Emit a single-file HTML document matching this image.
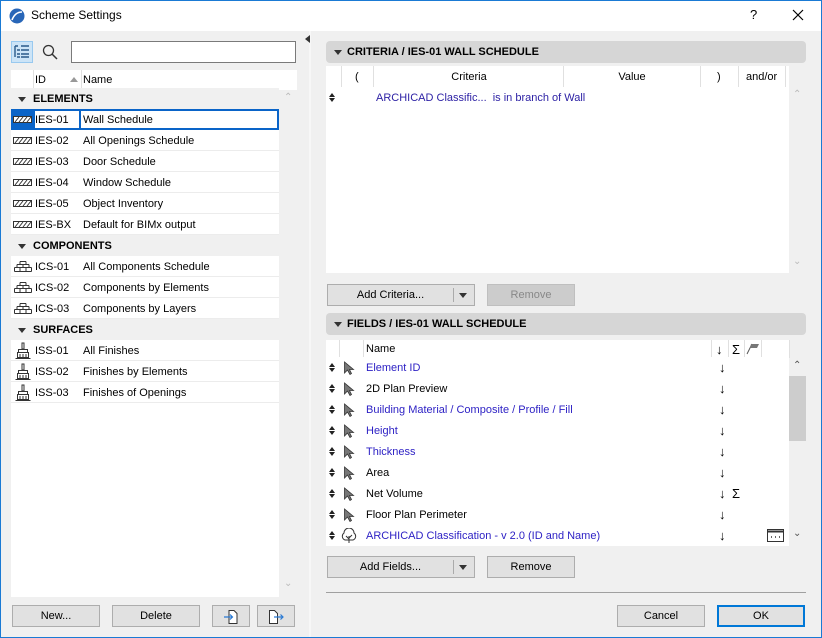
<!DOCTYPE html>
<html><head><meta charset="utf-8"><style>
*{box-sizing:border-box;margin:0;padding:0}
body{width:822px;height:638px;overflow:hidden;font-family:"Liberation Sans",sans-serif;font-size:11px;color:#000;background:#f0f0f0;position:relative}
.a{position:absolute}
.win{left:0;top:0;width:822px;height:638px;border:1px solid #1a7ad4}
.title{left:1px;top:1px;width:820px;height:30px;background:#fff}
.btn{position:absolute;background:#e1e1e1;border:1px solid #adadad;text-align:center;line-height:21px;font-size:11px}
.row{position:absolute;left:11px;width:268px;height:21px;background:#fff;border-bottom:1px solid #ececec;line-height:22px}
.grp{position:absolute;left:11px;width:268px;height:21px;background:#f0f0f0;line-height:22px;font-weight:bold;font-size:11px}
.grp:before{content:"";position:absolute;left:7px;top:9px;border-left:4px solid transparent;border-right:4px solid transparent;border-top:5px solid #333}
.grp span{position:absolute;left:22px}
.id{position:absolute;left:24px}
.nm{position:absolute;left:72px}
.hdr{position:absolute;background:#d6d6d6;border-radius:4px;height:22px;line-height:23px;font-weight:bold;font-size:11px}
.hdr:before{content:"";position:absolute;left:8px;top:9px;border-left:4px solid transparent;border-right:4px solid transparent;border-top:5px solid #333}
.hdr span{position:absolute;left:21px}
.fr{position:absolute;left:326px;width:463px;height:21px;line-height:22px;background:#fff}
.fr .n{position:absolute;left:40px}
.blue{color:#2b1fc4}
.ud{position:absolute;left:3px;top:6px;width:7px;height:10px}
.ud:before{content:"";position:absolute;left:0;top:0;border-left:3px solid transparent;border-right:3px solid transparent;border-bottom:4px solid #222}
.ud:after{content:"";position:absolute;left:0;top:5px;border-left:3px solid transparent;border-right:3px solid transparent;border-top:4px solid #222}
.arr{position:absolute;left:393px;font-size:13px}
.cur{position:absolute;left:17px;top:4px}
</style></head><body>
<div class="a win"></div>
<div class="a title"></div>
<svg class="a" style="left:9px;top:8px" width="16" height="16" viewBox="0 0 16 16"><circle cx="8" cy="8" r="7.5" fill="#2866b8"/><path d="M3 12 Q6 4 13 4" stroke="#fff" stroke-width="1.6" fill="none"/></svg>
<div class="a" style="left:31px;top:8px;font-size:12px">Scheme Settings</div>
<div class="a" style="left:750px;top:7px;font-size:13px">?</div>
<svg class="a" style="left:792px;top:9px" width="12" height="12"><path d="M1 1L11 11M11 1L1 11" stroke="#000" stroke-width="1.2"/></svg>

<div class="a" style="left:11px;top:41px;width:22px;height:22px;background:#cce4f7;border:1px solid #99c9ef"></div>
<svg class="a" style="left:14px;top:45px" width="16" height="14"><path d="M1 1h3M1 1v11M3 5h3M3 9h3M3 12h3M7 1h8M7 5h8M7 9h8M7 12h8" stroke="#2a5a8a" stroke-width="1.4" fill="none"/></svg>
<svg class="a" style="left:42px;top:44px" width="16" height="16"><circle cx="6.5" cy="6.5" r="5" stroke="#333" stroke-width="1.3" fill="none"/><path d="M10 10l5 5" stroke="#333" stroke-width="1.5"/></svg>
<div class="a" style="left:71px;top:41px;width:225px;height:22px;background:#fff;border:1px solid #7a7a7a"></div>

<div class="a" style="left:11px;top:70px;width:286px;height:527px;background:#fff"></div>
<div class="a" style="left:279px;top:90px;width:18px;height:507px;background:#f0f0f0"></div>
<div class="a" style="left:284px;top:92px;color:#bbb;font-size:10px">&#8963;</div>
<div class="a" style="left:284px;top:578px;color:#bbb;font-size:10px">&#8964;</div>
<div class="a" style="left:11px;top:70px;width:268px;height:20px;background:#fff;line-height:21px">
 <span class="a" style="left:24px">ID</span>
 <span class="a" style="left:59px;top:7px;border-left:4px solid transparent;border-right:4px solid transparent;border-bottom:5px solid #999"></span>
 <span class="a" style="left:72px">Name</span>
 <span class="a" style="left:22px;top:0;width:1px;height:20px;background:#e0e0e0"></span>
 <span class="a" style="left:70px;top:0;width:1px;height:20px;background:#e0e0e0"></span>
</div>
<div class="grp" style="top:88px"><span>ELEMENTS</span></div>
<div class="row" style="top:109px;background:#fff;border:none">
 <div class="a" style="left:0;top:0;width:22px;height:21px;background:#0a64c8"></div>
 <div class="a" style="left:22px;top:0;width:246px;height:21px;border:2px solid #0a64c8"></div>
 <div class="a" style="left:68px;top:0;width:2px;height:21px;background:#0a64c8"></div>
 <span class="id">IES-01</span><span class="nm">Wall Schedule</span>
 <svg class="a" style="left:2px;top:7px" width="20" height="7"><rect x=".5" y=".5" width="18" height="6" fill="#fff" stroke="#333"/><path d="M2 6L6 1M6 6L10 1M10 6L14 1M14 6L18 1" stroke="#333"/></svg>
</div>
<div class="row" style="top:130px"><svg class="a" style="left:2px;top:7px" width="20" height="7"><rect x=".5" y=".5" width="18" height="6" fill="#fff" stroke="#333"/><path d="M2 6L6 1M6 6L10 1M10 6L14 1M14 6L18 1" stroke="#333"/></svg><span class="id">IES-02</span><span class="nm">All Openings Schedule</span></div>
<div class="row" style="top:151px"><svg class="a" style="left:2px;top:7px" width="20" height="7"><rect x=".5" y=".5" width="18" height="6" fill="#fff" stroke="#333"/><path d="M2 6L6 1M6 6L10 1M10 6L14 1M14 6L18 1" stroke="#333"/></svg><span class="id">IES-03</span><span class="nm">Door Schedule</span></div>
<div class="row" style="top:172px"><svg class="a" style="left:2px;top:7px" width="20" height="7"><rect x=".5" y=".5" width="18" height="6" fill="#fff" stroke="#333"/><path d="M2 6L6 1M6 6L10 1M10 6L14 1M14 6L18 1" stroke="#333"/></svg><span class="id">IES-04</span><span class="nm">Window Schedule</span></div>
<div class="row" style="top:193px"><svg class="a" style="left:2px;top:7px" width="20" height="7"><rect x=".5" y=".5" width="18" height="6" fill="#fff" stroke="#333"/><path d="M2 6L6 1M6 6L10 1M10 6L14 1M14 6L18 1" stroke="#333"/></svg><span class="id">IES-05</span><span class="nm">Object Inventory</span></div>
<div class="row" style="top:214px"><svg class="a" style="left:2px;top:7px" width="20" height="7"><rect x=".5" y=".5" width="18" height="6" fill="#fff" stroke="#333"/><path d="M2 6L6 1M6 6L10 1M10 6L14 1M14 6L18 1" stroke="#333"/></svg><span class="id">IES-BX</span><span class="nm">Default for BIMx output</span></div>
<div class="grp" style="top:235px"><span>COMPONENTS</span></div>
<div class="row" style="top:256px"><svg class="a" style="left:3px;top:5px" width="18" height="11"><path d="M6 .5h6M3 3.5h12M.5 6.5h17M.5 10.5h17M6 .5v3M12 .5v3M3 3.5v3M9 3.5v3M15 3.5v3M.5 6.5v4M17.5 6.5v4M6 6.5v4M12 6.5v4" stroke="#333" fill="none"/></svg><span class="id">ICS-01</span><span class="nm">All Components Schedule</span></div>
<div class="row" style="top:277px"><svg class="a" style="left:3px;top:5px" width="18" height="11"><path d="M6 .5h6M3 3.5h12M.5 6.5h17M.5 10.5h17M6 .5v3M12 .5v3M3 3.5v3M9 3.5v3M15 3.5v3M.5 6.5v4M17.5 6.5v4M6 6.5v4M12 6.5v4" stroke="#333" fill="none"/></svg><span class="id">ICS-02</span><span class="nm">Components by Elements</span></div>
<div class="row" style="top:298px"><svg class="a" style="left:3px;top:5px" width="18" height="11"><path d="M6 .5h6M3 3.5h12M.5 6.5h17M.5 10.5h17M6 .5v3M12 .5v3M3 3.5v3M9 3.5v3M15 3.5v3M.5 6.5v4M17.5 6.5v4M6 6.5v4M12 6.5v4" stroke="#333" fill="none"/></svg><span class="id">ICS-03</span><span class="nm">Components by Layers</span></div>
<div class="grp" style="top:319px"><span>SURFACES</span></div>
<div class="row" style="top:340px"><svg class="a" style="left:4px;top:2px" width="16" height="17"><path d="M7 1h2v6H7z M3.5 7.5h9v3h-9z M2.5 10.5h11v5h-11z M5 12v3M8 12v3M11 12v3M.5 16.5h15" stroke="#333" fill="none"/></svg><span class="id">ISS-01</span><span class="nm">All Finishes</span></div>
<div class="row" style="top:361px"><svg class="a" style="left:4px;top:2px" width="16" height="17"><path d="M7 1h2v6H7z M3.5 7.5h9v3h-9z M2.5 10.5h11v5h-11z M5 12v3M8 12v3M11 12v3M.5 16.5h15" stroke="#333" fill="none"/></svg><span class="id">ISS-02</span><span class="nm">Finishes by Elements</span></div>
<div class="row" style="top:382px"><svg class="a" style="left:4px;top:2px" width="16" height="17"><path d="M7 1h2v6H7z M3.5 7.5h9v3h-9z M2.5 10.5h11v5h-11z M5 12v3M8 12v3M11 12v3M.5 16.5h15" stroke="#333" fill="none"/></svg><span class="id">ISS-03</span><span class="nm">Finishes of Openings</span></div>

<div class="btn" style="left:12px;top:605px;width:88px;height:22px">New...</div>
<div class="btn" style="left:112px;top:605px;width:88px;height:22px">Delete</div>
<div class="btn" style="left:212px;top:605px;width:38px;height:22px"><svg style="margin-top:3px" width="16" height="16"><path d="M6 1.5h5l3 3v10H6z" fill="#fff" stroke="#333"/><path d="M1 8h8M7 5.5L9.5 8 7 10.5" stroke="#2a7ad4" fill="none" stroke-width="1.2"/></svg></div>
<div class="btn" style="left:257px;top:605px;width:38px;height:22px"><svg style="margin-top:3px" width="16" height="16"><path d="M1.5 1.5h5l3 3v10h-8z" fill="#fff" stroke="#333"/><path d="M6 8h9M12.5 5.5L15 8l-2.5 2.5" stroke="#2a7ad4" fill="none" stroke-width="1.2"/></svg></div>

<div class="a" style="left:309px;top:31px;width:2px;height:606px;background:#f7f7f7"></div>
<div class="a" style="left:305px;top:35px;border-top:4px solid transparent;border-bottom:4px solid transparent;border-right:5px solid #333"></div>

<div class="hdr" style="left:326px;top:41px;width:480px"><span>CRITERIA / IES-01 WALL SCHEDULE</span></div>
<div class="a" style="left:326px;top:66px;width:463px;height:207px;background:#fff"></div>
<div class="a" style="left:326px;top:66px;width:459px;height:21px;line-height:22px;background:#fff">
 <span class="a" style="left:15px;width:1px;height:21px;background:#e0e0e0"></span>
 <span class="a" style="left:29px">(</span>
 <span class="a" style="left:47px;width:1px;height:21px;background:#e0e0e0"></span>
 <span class="a" style="left:48px;width:190px;text-align:center">Criteria</span>
 <span class="a" style="left:237px;width:1px;height:21px;background:#e0e0e0"></span>
 <span class="a" style="left:238px;width:136px;text-align:center">Value</span>
 <span class="a" style="left:374px;width:1px;height:21px;background:#e0e0e0"></span>
 <span class="a" style="left:391px">)</span>
 <span class="a" style="left:412px;width:1px;height:21px;background:#e0e0e0"></span>
 <span class="a" style="left:420px">and/or</span>
 <span class="a" style="left:459px;width:1px;height:21px;background:#e0e0e0"></span>
</div>
<div class="a" style="left:326px;top:87px;width:463px;height:21px;line-height:22px">
 <span class="ud"></span>
 <span class="a" style="left:50px;color:#2b1fa4">ARCHICAD Classific...&nbsp; is in branch of Wall</span>
</div>
<div class="a" style="left:789px;top:87px;width:17px;height:186px;background:#f0f0f0"></div>
<div class="a" style="left:793px;top:89px;color:#bbb;font-size:10px">&#8963;</div>
<div class="a" style="left:793px;top:256px;color:#bbb;font-size:10px">&#8964;</div>
<div class="btn" style="left:327px;top:284px;width:148px;height:22px"><span class="a" style="left:0;width:125px">Add Criteria...</span><span class="a" style="left:125px;top:3px;width:1px;height:14px;background:#aaa"></span><span class="a" style="left:131px;top:8px;border-left:4px solid transparent;border-right:4px solid transparent;border-top:5px solid #333"></span></div>
<div class="btn" style="left:487px;top:284px;width:88px;height:22px;background:#ccc;border-color:#bfbfbf;color:#888">Remove</div>

<div class="hdr" style="left:326px;top:313px;width:480px"><span>FIELDS / IES-01 WALL SCHEDULE</span></div>
<div class="a" style="left:326px;top:340px;width:463px;height:206px;background:#fff"></div>
<div class="a" style="left:326px;top:340px;width:463px;height:18px;line-height:19px">
 <span class="a" style="left:13px;width:1px;height:18px;background:#e0e0e0"></span>
 <span class="a" style="left:37px;width:1px;height:18px;background:#e0e0e0"></span>
 <span class="a" style="left:40px">Name</span>
 <span class="a" style="left:385px;width:1px;height:18px;background:#e0e0e0"></span>
 <span class="a" style="left:390px;font-size:13px">↓</span>
 <span class="a" style="left:402px;width:1px;height:18px;background:#e0e0e0"></span>
 <span class="a" style="left:406px;font-size:13px">Σ</span>
 <span class="a" style="left:418px;width:1px;height:18px;background:#e0e0e0"></span>
 <svg class="a" style="left:420px;top:2px" width="14" height="13"><path d="M1 12L6 2" stroke="#555"/><path d="M5 2h8l-2 4H4z" fill="#777"/></svg>
 <span class="a" style="left:435px;width:1px;height:18px;background:#e0e0e0"></span>
 <span class="a" style="left:463px;width:1px;height:18px;background:#e0e0e0"></span>
</div>
<div class="fr" style="top:357px"><span class="ud"></span><svg class="cur" width="12" height="14"><path d="M1.5 1L1.5 12 4.5 9 7 13.5 8.5 12.5 6.5 8.5 10.5 8.5Z" fill="#777" stroke="#333" stroke-width=".8"/></svg><span class="n blue">Element ID</span><span class="arr">↓</span></div>
<div class="fr" style="top:378px"><span class="ud"></span><svg class="cur" width="12" height="14"><path d="M1.5 1L1.5 12 4.5 9 7 13.5 8.5 12.5 6.5 8.5 10.5 8.5Z" fill="#777" stroke="#333" stroke-width=".8"/></svg><span class="n">2D Plan Preview</span><span class="arr">↓</span></div>
<div class="fr" style="top:399px"><span class="ud"></span><svg class="cur" width="12" height="14"><path d="M1.5 1L1.5 12 4.5 9 7 13.5 8.5 12.5 6.5 8.5 10.5 8.5Z" fill="#777" stroke="#333" stroke-width=".8"/></svg><span class="n blue">Building Material / Composite / Profile / Fill</span><span class="arr">↓</span></div>
<div class="fr" style="top:420px"><span class="ud"></span><svg class="cur" width="12" height="14"><path d="M1.5 1L1.5 12 4.5 9 7 13.5 8.5 12.5 6.5 8.5 10.5 8.5Z" fill="#777" stroke="#333" stroke-width=".8"/></svg><span class="n blue">Height</span><span class="arr">↓</span></div>
<div class="fr" style="top:441px"><span class="ud"></span><svg class="cur" width="12" height="14"><path d="M1.5 1L1.5 12 4.5 9 7 13.5 8.5 12.5 6.5 8.5 10.5 8.5Z" fill="#777" stroke="#333" stroke-width=".8"/></svg><span class="n blue">Thickness</span><span class="arr">↓</span></div>
<div class="fr" style="top:462px"><span class="ud"></span><svg class="cur" width="12" height="14"><path d="M1.5 1L1.5 12 4.5 9 7 13.5 8.5 12.5 6.5 8.5 10.5 8.5Z" fill="#777" stroke="#333" stroke-width=".8"/></svg><span class="n">Area</span><span class="arr">↓</span></div>
<div class="fr" style="top:483px"><span class="ud"></span><svg class="cur" width="12" height="14"><path d="M1.5 1L1.5 12 4.5 9 7 13.5 8.5 12.5 6.5 8.5 10.5 8.5Z" fill="#777" stroke="#333" stroke-width=".8"/></svg><span class="n">Net Volume</span><span class="arr">↓</span><span class="a" style="left:406px;font-size:13px">Σ</span></div>
<div class="fr" style="top:504px"><span class="ud"></span><svg class="cur" width="12" height="14"><path d="M1.5 1L1.5 12 4.5 9 7 13.5 8.5 12.5 6.5 8.5 10.5 8.5Z" fill="#777" stroke="#333" stroke-width=".8"/></svg><span class="n">Floor Plan Perimeter</span><span class="arr">↓</span></div>
<div class="fr" style="top:525px"><span class="ud"></span><svg class="a" style="left:14px;top:3px" width="18" height="16"><path d="M9 15V8M9 11L6 8M9 10l3-3M5 12a4 4 0 0 1-1-7 5 5 0 0 1 10 0 4 4 0 0 1-1 7z" stroke="#333" fill="none"/></svg><span class="n blue">ARCHICAD Classification - v 2.0 (ID and Name)</span><span class="arr">↓</span><svg class="a" style="left:441px;top:4px" width="17" height="13"><rect x=".5" y=".5" width="16" height="12" fill="#fff" stroke="#333"/><path d="M.5 2.5h16" stroke="#333" stroke-width="2"/><path d="M4 8h1M8 8h1M12 8h1" stroke="#333" stroke-width="1.5"/></svg></div>
<div class="a" style="left:789px;top:358px;width:17px;height:188px;background:#f0f0f0"></div>
<div class="a" style="left:789px;top:376px;width:17px;height:65px;background:#cdcdcd"></div>
<div class="a" style="left:793px;top:360px;color:#555;font-size:10px">&#8963;</div>
<div class="a" style="left:793px;top:528px;color:#555;font-size:10px">&#8964;</div>
<div class="btn" style="left:327px;top:556px;width:148px;height:22px"><span class="a" style="left:0;width:125px">Add Fields...</span><span class="a" style="left:125px;top:3px;width:1px;height:14px;background:#aaa"></span><span class="a" style="left:131px;top:8px;border-left:4px solid transparent;border-right:4px solid transparent;border-top:5px solid #333"></span></div>
<div class="btn" style="left:487px;top:556px;width:88px;height:22px">Remove</div>

<div class="a" style="left:326px;top:592px;width:480px;height:1px;background:#a0a0a0"></div>
<div class="btn" style="left:617px;top:605px;width:88px;height:22px">Cancel</div>
<div class="btn" style="left:717px;top:605px;width:88px;height:22px;border:2px solid #0078d7;line-height:19px">OK</div>
</body></html>
